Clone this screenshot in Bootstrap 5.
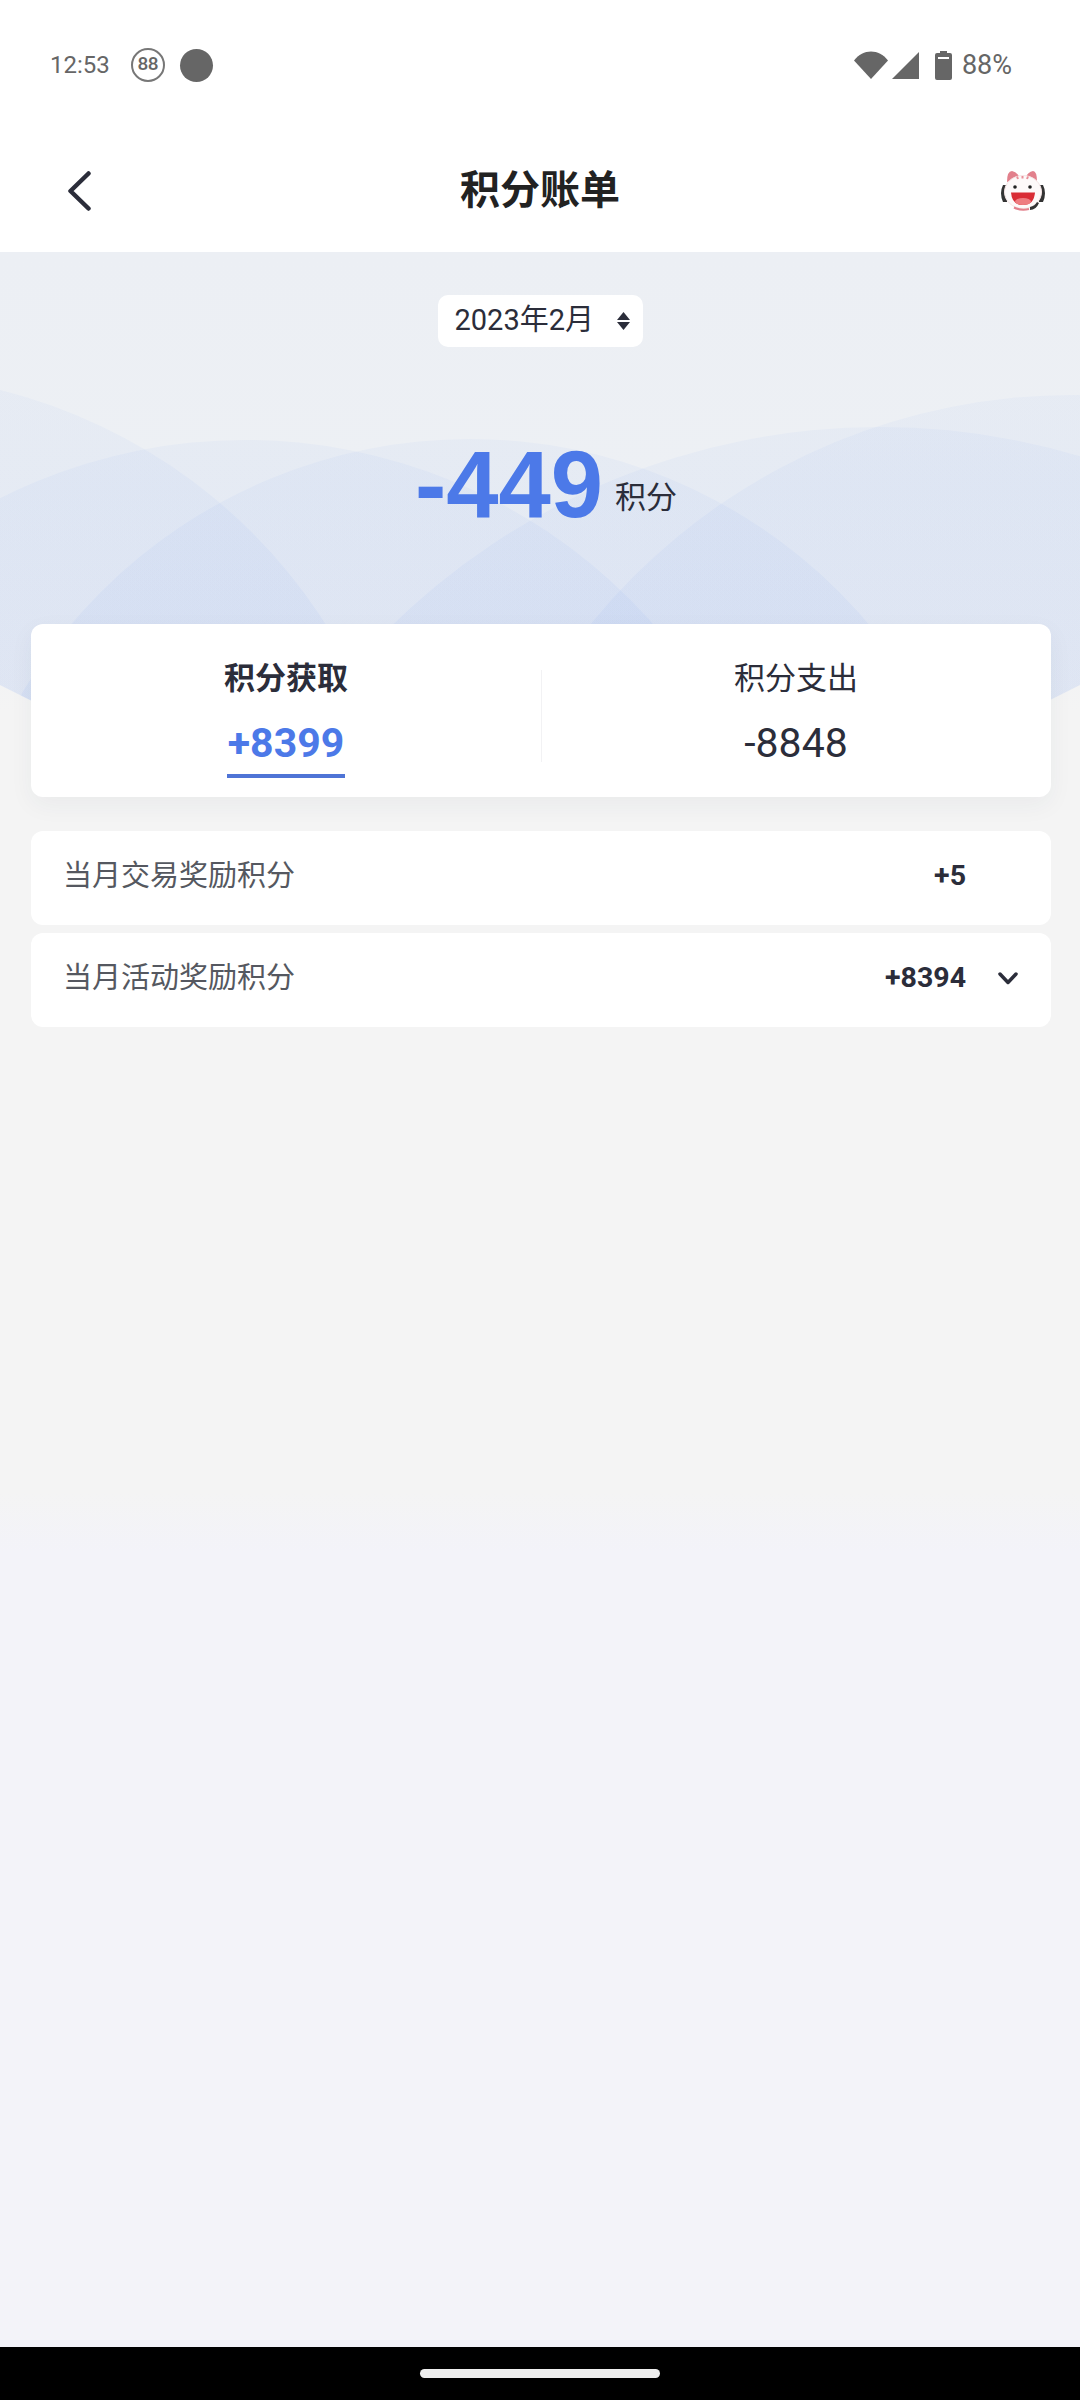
<!DOCTYPE html>
<html lang="zh-CN">
<head>
  <meta charset="UTF-8" />
  <meta name="viewport" content="width=device-width, initial-scale=1.0" />
  <title>积分账单</title>
  <link href="https://cdn.jsdelivr.net/npm/bootstrap@5.3.2/dist/css/bootstrap.min.css" rel="stylesheet" />
  <style>
    html, body {
      width: 1080px;
      height: 2400px;
      overflow: hidden;
    }

    body {
      background: #fff;
      color: #2b2d3a;
      font-family: Roboto, "Noto Sans CJK SC", sans-serif;
    }

    .phone-status {
      height: 130px;
      padding: 0 68px 0 50px;
      color: #666;
    }

    .phone-status .status-row {
      height: 130px;
    }

    .status-time { font-size: 24px; margin-right: 21px; }
    .status-pct { font-size: 27px; margin-left: 10px; }

    .ring-88 {
      width: 34px;
      height: 34px;
      border: 2.5px solid #777;
      border-radius: 50%;
      font-size: 19px;
      font-weight: 500;
      line-height: 28px;
      text-align: center;
      letter-spacing: -0.5px;
      margin-right: 15px;
    }

    .status-dot {
      width: 33px;
      height: 33px;
      background: #666;
      border-radius: 50%;
    }

    .top-nav {
      height: 122px;
      padding: 0 34px;
    }

    .nav-side { width: 120px; }
    .nav-back { padding-left: 34px; }

    .top-nav h1 {
      font-size: 40px;
      font-weight: 700;
      color: #222;
      margin: 0;
      line-height: 1;
    }

    .bill-main {
      height: 2095px;
      background: linear-gradient(to bottom, #eceff4 0, #edf0f4 240px, #f4f4f4 460px, #f4f4f4 1240px, #f3f3f9 1300px);
    }

    .hero-art {
      top: 0;
      left: 0;
    }

    .hero-block {
      height: 372px;
      padding-top: 43px;
    }

    .month-pill {
      height: 52px;
      width: 205px;
      background: #fff;
      border-radius: 10px;
      font-size: 29px;
      padding-left: 17px;
      gap: 23px;
    }

    .total-line {
      margin-top: 84px;
      gap: 12px;
      margin-left: 12px;
    }

    .total-num {
      font-family: "Liberation Sans", Arial, sans-serif;
      font-size: 94px;
      font-weight: 700;
      line-height: 108px;
      color: #4c79e8;
    }

    .total-unit {
      font-size: 31px;
      line-height: 42px;
      padding-bottom: 20px;
    }

    .sum-panel {
      margin: 0 29px 0 31px;
      height: 173px;
      background: #fff;
      border-radius: 12px;
      box-shadow: 0 8px 24px rgba(40, 50, 80, 0.05);
    }

    .sum-col {
      width: 50%;
      padding-top: 34px;
      text-align: center;
    }

    .sum-col + .sum-col::before {
      content: "";
      position: absolute;
      left: 0;
      top: 46px;
      height: 92px;
      border-left: 1px solid #f2f2f4;
    }

    .sum-label { font-size: 31px; line-height: 42px; }
    .sum-value { font-size: 41px; line-height: 48px; margin-top: 19px; }

    .sum-active .sum-label { font-weight: 700; }
    .sum-active .sum-value { font-weight: 700; color: #4c79e8; }

    .sum-underline {
      width: 118px;
      height: 4px;
      background: #4f74d6;
      margin: 7px auto 0;
    }

    .detail-list {
      margin: 34px 29px 0 31px;
      gap: 8px;
    }

    .detail-row {
      height: 94px;
      background: #fff;
      border-radius: 12px;
      padding-left: 32px;
      padding-bottom: 3px;
    }

    .detail-name { font-size: 29px; color: #555860; }
    .detail-num { font-size: 28.5px; font-weight: 700; }
    .detail-slot { width: 85px; padding-left: 32px; }

    .home-bar {
      height: 53px;
      background: #000;
    }

    .home-pill {
      width: 240px;
      height: 9px;
      background: #eee;
      border-radius: 5px;
    }
  </style>
</head>
<body>
  <div class="phone-status">
    <div class="status-row d-flex align-items-center justify-content-between">
      <div class="d-flex align-items-center">
        <span class="status-time">12:53</span>
        <span class="ring-88">88</span>
        <span class="status-dot"></span>
      </div>
      <div class="d-flex align-items-center">
        <svg width="34" height="28" viewBox="0 0 34 28"><path d="M0 9.5C9 -2.5 25 -2.5 34 9.5L17 28Z" fill="#666"/></svg>
        <svg class="ms-1" width="27" height="27" viewBox="0 0 27 27"><path d="M27 0V27H0Z" fill="#666"/></svg>
        <svg class="ms-3" width="17" height="29" viewBox="0 0 17 29"><path d="M5 0H12V2H15A2 2 0 0 1 17 4V27A2 2 0 0 1 15 29H2A2 2 0 0 1 0 27V4A2 2 0 0 1 2 2H5Z" fill="#666"/><rect x="3" y="6" width="11" height="2" fill="#fff"/></svg>
        <span class="status-pct">88%</span>
      </div>
    </div>
  </div>

  <div class="top-nav d-flex align-items-center justify-content-between">
    <div class="nav-side nav-back d-flex">
      <svg width="23" height="40" viewBox="0 0 23 40"><path d="M20.5 2.5L2.5 20L20.5 37.5" fill="none" stroke="#2b2d3a" stroke-width="4.5" stroke-linecap="round" stroke-linejoin="round"/></svg>
    </div>
    <h1>积分账单</h1>
    <div class="nav-side d-flex justify-content-end">
      <svg width="46" height="44" viewBox="0 0 46 44">
        <path d="M7 16H3Q-1 24 3 33H7ZM39 16H43Q47 24 43 33H39Z" fill="#333"/>
        <path d="M7 13Q7 2 12 2Q17 3 20 9ZM37 13Q37 2 33 2Q28 3 25 9Z" fill="#e2808c"/>
        <ellipse cx="23" cy="23" rx="18.5" ry="16.5" fill="#fdf9f9" stroke="#f6e6e6" stroke-width="1"/>
        <path d="M17 7.5L18 10M22.5 7V9.5M28 7.5L27 10" stroke="#e9909a" stroke-width="2"/>
        <circle cx="15" cy="18" r="1.8" fill="#222"/>
        <circle cx="30" cy="18" r="1.8" fill="#222"/>
        <path d="M11 23.5H35Q34 36 23 36Q12 36 11 23.5Z" fill="#d92c35"/>
        <ellipse cx="23" cy="32.5" rx="8" ry="3.5" fill="#ee7c80"/>
        <path d="M30 38Q35 37 37 33L39 34Q36 41 30 41Z" fill="#333"/>
        <path d="M14 38.5Q21 42 29 40" stroke="#e2808c" stroke-width="2" fill="none"/>
      </svg>
    </div>
  </div>

  <main class="bill-main position-relative">
    <svg class="hero-art position-absolute" width="1080" height="548" viewBox="0 252 1080 548">
      <defs>
        <linearGradient id="arcFill" gradientUnits="userSpaceOnUse" x1="0" y1="390" x2="0" y2="700">
          <stop offset="0" stop-color="#7aa0ee" stop-opacity="0.055"/>
          <stop offset="1" stop-color="#7aa0ee" stop-opacity="0.09"/>
        </linearGradient>
        <clipPath id="arcClip">
          <path d="M0 252H1080V685L1040 705H40L0 685Z"/>
        </clipPath>
      </defs>
      <g clip-path="url(#arcClip)" fill="url(#arcFill)">
        <circle cx="-131" cy="916" r="542"/>
        <circle cx="245" cy="985" r="545"/>
        <circle cx="470" cy="961" r="522"/>
        <circle cx="1072" cy="1015" r="620"/>
        <circle cx="880" cy="1127" r="700"/>
      </g>
    </svg>

    <div class="position-relative">
      <section class="hero-block d-flex flex-column align-items-center">
        <div class="month-pill d-flex align-items-center">
          <span>2023年2月</span>
          <svg width="13" height="20" viewBox="0 0 13 20"><path d="M6.5 1L13 9H0ZM6.5 19L0 11H13Z" fill="#2b2d3a"/></svg>
        </div>
        <div class="total-line d-flex align-items-end justify-content-center">
          <span class="total-num">-449</span>
          <span class="total-unit">积分</span>
        </div>
      </section>

      <section class="sum-panel d-flex">
        <div class="sum-col sum-active position-relative">
          <div class="sum-label">积分获取</div>
          <div class="sum-value">+8399</div>
          <div class="sum-underline"></div>
        </div>
        <div class="sum-col position-relative">
          <div class="sum-label">积分支出</div>
          <div class="sum-value">-8848</div>
        </div>
      </section>

      <section class="detail-list d-flex flex-column">
        <div class="detail-row d-flex align-items-center">
          <span class="detail-name flex-grow-1">当月交易奖励积分</span>
          <span class="detail-num">+5</span>
          <span class="detail-slot"></span>
        </div>
        <div class="detail-row d-flex align-items-center">
          <span class="detail-name flex-grow-1">当月活动奖励积分</span>
          <span class="detail-num">+8394</span>
          <span class="detail-slot d-flex">
            <svg width="20" height="13" viewBox="0 0 20 13"><path d="M2 2L10 10.5L18 2" fill="none" stroke="#2b2d3a" stroke-width="3.5" stroke-linecap="round" stroke-linejoin="round"/></svg>
          </span>
        </div>
      </section>
    </div>
  </main>

  <div class="home-bar d-flex align-items-center justify-content-center">
    <div class="home-pill"></div>
  </div>

  <script src="https://cdn.jsdelivr.net/npm/bootstrap@5.3.2/dist/js/bootstrap.bundle.min.js"></script>
</body>
</html>
